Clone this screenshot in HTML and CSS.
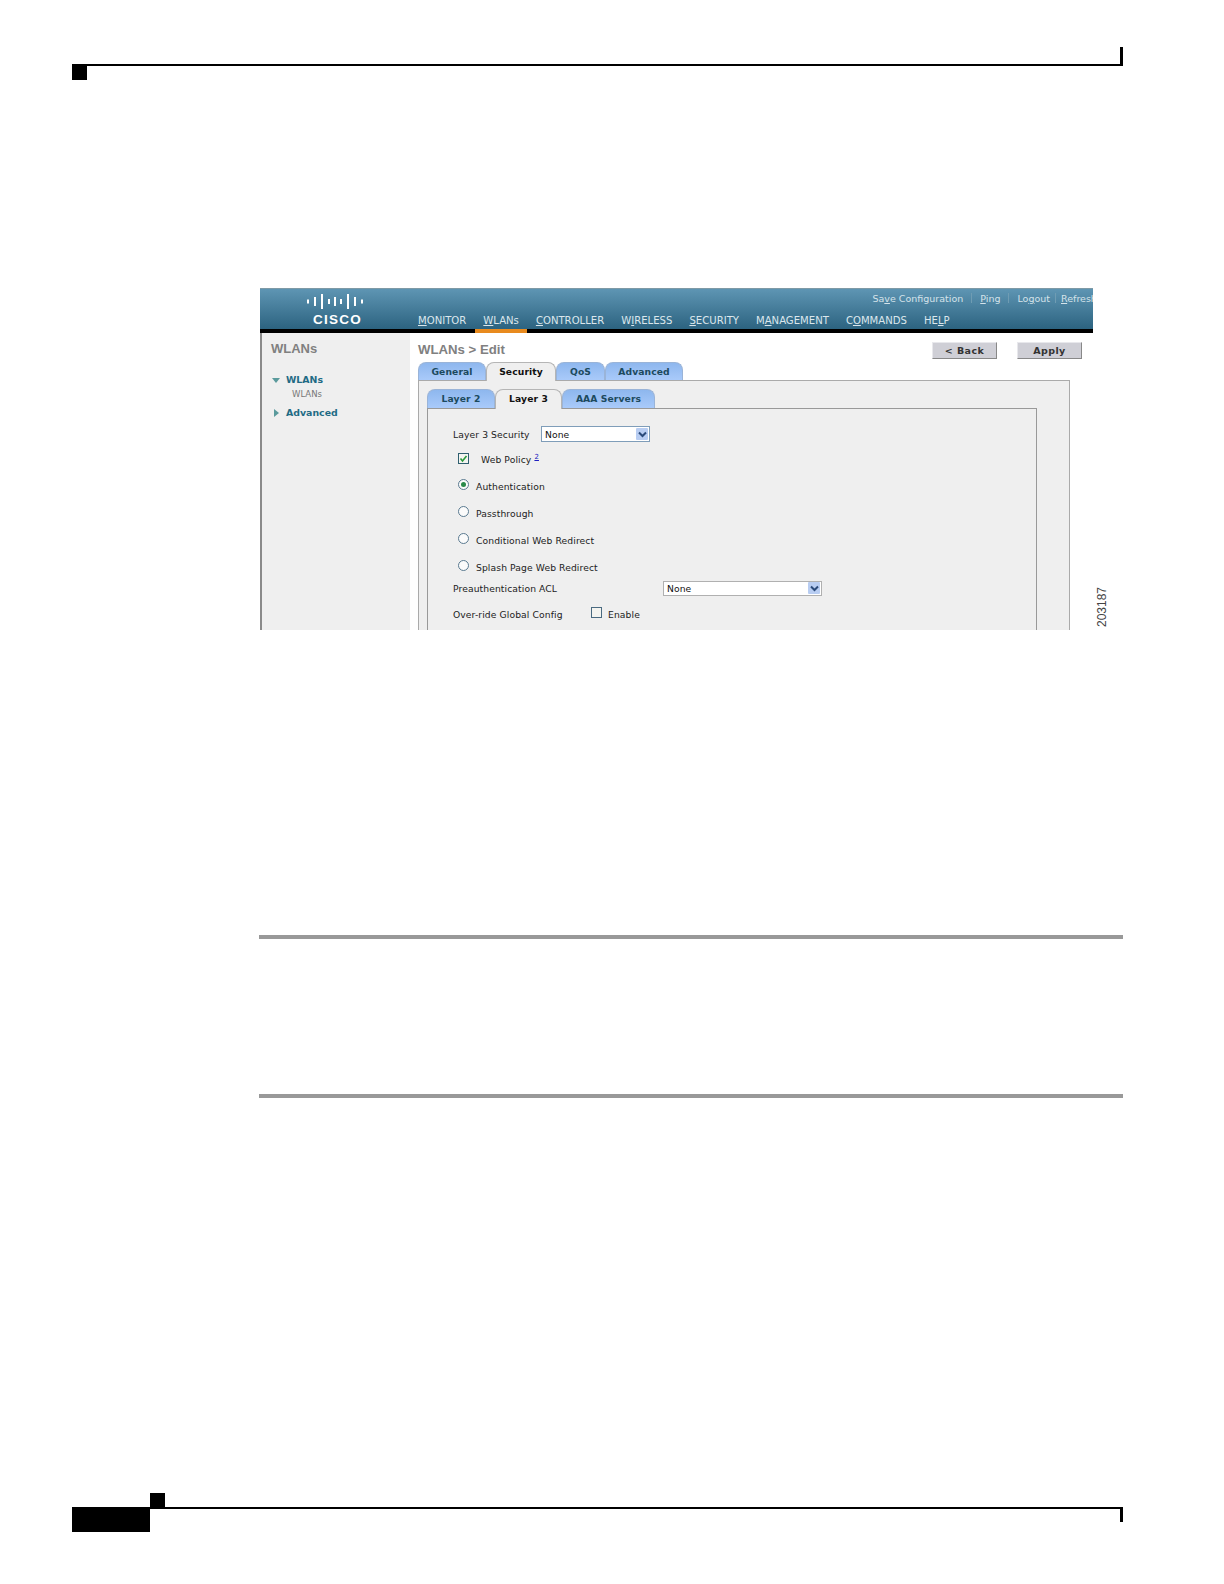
FILE: index.html
```html
<!DOCTYPE html>
<html lang="en">
<head>
<meta charset="utf-8">
<title>WLANs Edit</title>
<link rel="stylesheet" href="styles.css">
</head>
<body>
<div class="page">
  <div class="page-head"></div>

  <div class="figure-row">
    <div class="ui">
      <header class="ui-head">
        <div class="logo">
          <svg class="logo-bars" width="56" height="15" viewBox="0 0 56 15">
            <g fill="#fff">
              <rect x="0" y="5.5" width="2" height="4"/>
              <rect x="7" y="3" width="2" height="9"/>
              <rect x="14" y="0" width="2" height="15"/>
              <rect x="21" y="5" width="2" height="5"/>
              <rect x="27" y="3" width="2" height="9"/>
              <rect x="33" y="5" width="2" height="5"/>
              <rect x="40" y="0" width="2" height="15"/>
              <rect x="47" y="3" width="2" height="9"/>
              <rect x="54" y="5.5" width="2" height="4"/>
            </g>
          </svg>
          <span class="logo-word">CISCO</span>
        </div>
        <div class="head-right">
          <div class="top-links">
            <span>Sa<u>v</u>e Configuration</span><i></i>
            <span><u>P</u>ing</span><i></i>
            <span>Lo<u>g</u>out</span><i class="near"></i>
            <span class="cut"><u>R</u>efresh</span>
          </div>
          <nav class="nav">
            <span class="nav-item"><u>M</u>ONITOR</span>
            <span class="nav-item current"><u>W</u>LANs</span>
            <span class="nav-item"><u>C</u>ONTROLLER</span>
            <span class="nav-item">W<u>I</u>RELESS</span>
            <span class="nav-item"><u>S</u>ECURITY</span>
            <span class="nav-item">M<u>A</u>NAGEMENT</span>
            <span class="nav-item">C<u>O</u>MMANDS</span>
            <span class="nav-item">HE<u>L</u>P</span>
          </nav>
        </div>
      </header>

      <div class="ui-body">
        <aside class="side">
          <div class="side-title">WLANs</div>
          <div class="side-item first"><span class="tri-down"></span>WLANs</div>
          <div class="side-sub">WLANs</div>
          <div class="side-item adv"><span class="tri-right"></span>Advanced</div>
        </aside>

        <main class="main">
          <div class="toolbar">
            <div class="crumb">WLANs &gt; Edit</div>
            <div class="buttons">
              <span class="btn">&lt; Back</span>
              <span class="btn">Apply</span>
            </div>
          </div>

          <div class="tabs">
            <span class="tab w-general">General</span>
            <span class="tab active w-security">Security</span>
            <span class="tab w-qos">QoS</span>
            <span class="tab w-advanced">Advanced</span>
          </div>

          <div class="panel">
            <div class="tabs sub">
              <span class="tab w-l2">Layer 2</span>
              <span class="tab active w-l3">Layer 3</span>
              <span class="tab w-aaa">AAA Servers</span>
            </div>
            <div class="inner">
              <div class="row r-sec">
                <span class="label l-sec">Layer 3 Security</span>
                <span class="select s-small"><span>None</span><span class="arrow"><svg width="9" height="7" viewBox="0 0 9 7"><path d="M1 1.5 4.5 5 8 1.5" fill="none" stroke="#2a4a7a" stroke-width="2"/></svg></span></span>
              </div>
              <div class="row r-web">
                <span class="check on"><svg width="9" height="9" viewBox="0 0 9 9"><path d="M1.5 4.5 3.5 7 7.5 2" fill="none" stroke="#2a9a3a" stroke-width="1.6"/></svg></span>
                <span class="web-label">Web Policy <a class="sup" href="#">2</a></span>
              </div>
              <div class="row r-radio first-radio"><span class="radio on"></span><span>Authentication</span></div>
              <div class="row r-radio"><span class="radio"></span><span>Passthrough</span></div>
              <div class="row r-radio"><span class="radio"></span><span>Conditional Web Redirect</span></div>
              <div class="row r-radio"><span class="radio"></span><span>Splash Page Web Redirect</span></div>
              <div class="row r-acl">
                <span class="label l-acl">Preauthentication ACL</span>
                <span class="select s-wide"><span>None</span><span class="arrow"><svg width="9" height="7" viewBox="0 0 9 7"><path d="M1 1.5 4.5 5 8 1.5" fill="none" stroke="#2a4a7a" stroke-width="2"/></svg></span></span>
              </div>
              <div class="row r-over">
                <span class="label l-over">Over-ride Global Config</span>
                <span class="check raised"></span>
                <span class="enable">Enable</span>
              </div>
            </div>
          </div>
        </main>
      </div>
    </div>
    <div class="fig-num">203187</div>
  </div>

  <div class="rules">
    <div class="rule"></div>
    <div class="rule second"></div>
  </div>

  <div class="page-foot"><span class="foot-tick"></span></div>
</div>
</body>
</html>
```
FILE: styles.css
```css
* { box-sizing: border-box; }
html, body { margin: 0; padding: 0; background: #fff; }
body { font-family: "DejaVu Sans", Verdana, sans-serif; }
.page { width: 1224px; height: 1584px; overflow: hidden; position: relative; }

.page-head {
  position: relative;
  height: 66px;
  margin: 0 101px 0 87px;
  border-bottom: 2px solid #000;
}
.page-head::before {
  content: ""; position: absolute; left: -15px; top: 64px;
  width: 15px; height: 16px; background: #000;
}
.page-head::after {
  content: ""; position: absolute; right: 0; top: 47px;
  width: 3px; height: 17px; background: #000;
}

.figure-row { display: flex; align-items: flex-end; margin: 222px 0 0 260px; }
.ui { width: 833px; height: 342px; overflow: hidden; background: #fff; flex: none; }
.fig-num {
  writing-mode: vertical-rl; transform: rotate(180deg);
  font: 12px "Liberation Sans", Arial, sans-serif; color: #444;
  margin: 0 0 3px 3px; line-height: 12px;
}

.ui-head {
  height: 45px; display: flex;
  border-top: 1px solid #7f9aa6;
  border-bottom: 4px solid #000;
  background: linear-gradient(#5e95b3, #2c6380);
}
.logo { width: 158px; flex: none; display: flex; flex-direction: column; align-items: center; padding: 5px 0 0 0; }
.logo-bars { display: block; margin-left: -8px; }
.logo-word { font: bold 13.5px/14px "Liberation Sans", Arial, sans-serif; color: #fff; letter-spacing: 1.2px; margin: 4px 0 0 -3px; }
.head-right { flex: 1; min-width: 0; display: flex; flex-direction: column; }
.top-links {
  height: 18px; display: flex; align-items: center; justify-content: flex-end;
  font-size: 9.5px; color: #d5e3ea; white-space: nowrap; overflow: hidden;
}
.top-links i { width: 1px; height: 10px; background: #6f9cb3; margin: 0 8px; }
.top-links i.near { margin: 0 5px; }
.top-links .cut { width: 32px; overflow: hidden; flex: none; }
.nav { display: flex; font-size: 10.1px; color: #dbe7ed; height: 26px; margin-bottom: -4px; position: relative; }
.nav-item { padding: 6px 8.5px 0; white-space: nowrap; line-height: 16px; height: 26px; }
.nav-item.current { border-bottom: 4px solid #e88a1e; }
.nav-item:nth-child(1) { padding-left: 0; }

.ui-body { display: flex; height: 297px; border-left: 2px solid #8a8a8a; }
.side { width: 148px; flex: none; background: #efefef; padding: 7px 0 0 9px; }
.side-title { font: bold 13px/17px "Liberation Sans", Arial, sans-serif; color: #808080; }
.side-item { font-size: 9.4px; font-weight: bold; color: #1f6b85; position: relative; padding-left: 15px; line-height: 14px; }
.side-item.first { margin-top: 16px; }
.side-item.adv { margin-top: 6px; }
.side-sub { font-size: 8.5px; color: #777; padding-left: 21px; line-height: 12px; margin-top: 1px; }
.tri-down { position: absolute; left: 1px; top: 5px; border-left: 4px solid transparent; border-right: 4px solid transparent; border-top: 5px solid #5a9a9c; }
.tri-right { position: absolute; left: 3px; top: 3px; border-top: 4px solid transparent; border-bottom: 4px solid transparent; border-left: 5px solid #5a9a9c; }

.main { flex: 1; min-width: 0; padding-left: 8px; background: #fff; }
.toolbar { height: 29px; display: flex; justify-content: space-between; }
.crumb { font: bold 13.2px/34px "Liberation Sans", Arial, sans-serif; color: #808080; }
.buttons { display: flex; gap: 20px; padding: 9px 11px 0 0; }
.btn {
  width: 65px; height: 17px; background: #cfcfd6;
  border: 1px solid #e8e8ec; border-right-color: #888; border-bottom-color: #888;
  font-size: 9.5px; font-weight: bold; color: #333; text-align: center; line-height: 15px; letter-spacing: .4px;
}

.tabs { display: flex; height: 18px; gap: 0; position: relative; z-index: 1; }
.tabs.sub { height: 19px; margin: 0 0 0 8px; }
.tab {
  display: block; text-align: center;
  background: linear-gradient(#8eb7ee, #a9cafa);
  border: 1px solid #9ab4d8; border-bottom: 0; border-radius: 8px 8px 0 0;
  font-size: 9.2px; font-weight: bold; color: #1c4a5e; line-height: 18px; letter-spacing: .1px;
}
.tab.active { background: #efefef; color: #111; border-color: #b5b5b5; height: calc(100% + 1px); }
.w-general { width: 68px; } .w-security { width: 70px; } .w-qos { width: 49px; } .w-advanced { width: 78px; }
.w-l2 { width: 68px; } .w-l3 { width: 67px; } .w-aaa { width: 93px; }

.panel { width: 652px; height: 250px; background: #efefef; border: 1px solid #aaa; border-bottom: 0; padding-top: 8px; }
.inner { width: 610px; margin-left: 8px; height: 240px; border: 1px solid #999; border-bottom: 0; font-size: 9.2px; color: #222; letter-spacing: .1px; }

.row { display: flex; align-items: center; white-space: nowrap; }
.label { display: block; }
.l-sec { width: 88px; }
.r-sec { height: 16px; margin-top: 17px; padding-left: 25px; }
.r-web { height: 11px; margin-top: 11px; padding-left: 30px; }
.web-label { margin-left: 12px; }
.sup { font-size: 7px; color: #2020c0; vertical-align: 4px; }
.r-radio { height: 11px; margin-top: 16px; padding-left: 30px; gap: 7px; }
.first-radio { margin-top: 16.5px; }
.r-acl { height: 15px; margin-top: 8px; padding-left: 25px; }
.l-acl { width: 210px; }
.r-over { height: 11px; margin-top: 13px; padding-left: 25px; }
.l-over { width: 138px; }
.enable { margin-left: 6px; }

.select {
  display: flex; align-items: center; justify-content: space-between;
  height: 16px; background: #fff; border: 1px solid #7f9db9; padding: 0 1px 0 3px; color: #111; font-size: 9.2px;
}
.s-small { width: 109px; }
.s-wide { width: 159px; height: 15px; border-color: #b0b0b0; }
.arrow { width: 12px; height: 12px; background: #b8cdf2; display: flex; align-items: center; justify-content: center; border-radius: 1px; }
.check { width: 11px; height: 11px; flex: none; border: 1px solid #2f5f6f; background: #f4f4f0; display: flex; align-items: center; justify-content: center; }
.check.raised { margin-bottom: 3px; border-color: #4a6a80; }
.radio { width: 11px; height: 11px; flex: none; margin-bottom: 3px; border-radius: 50%; border: 1px solid #5a7a90; background: #fbfbfb; display: flex; align-items: center; justify-content: center; }
.radio.on::after { content: ""; width: 5px; height: 5px; border-radius: 50%; background: #2a8a4a; }

.rules { margin: 0 101px 0 259px; padding-top: 305px; }
.rule { height: 4px; background: #999; }
.rule.second { margin-top: 155px; }

.page-foot {
  position: relative; margin: 409px 101px 0 150px; height: 2px; background: #000;
}
.page-foot::before { content: ""; position: absolute; left: -78px; top: 0; width: 78px; height: 25px; background: #000; }
.page-foot::after { content: ""; position: absolute; left: 0; top: -14px; width: 15px; height: 14px; background: #000; }
.foot-tick { position: absolute; right: 0; top: 0; width: 3px; height: 15px; background: #000; }
```
